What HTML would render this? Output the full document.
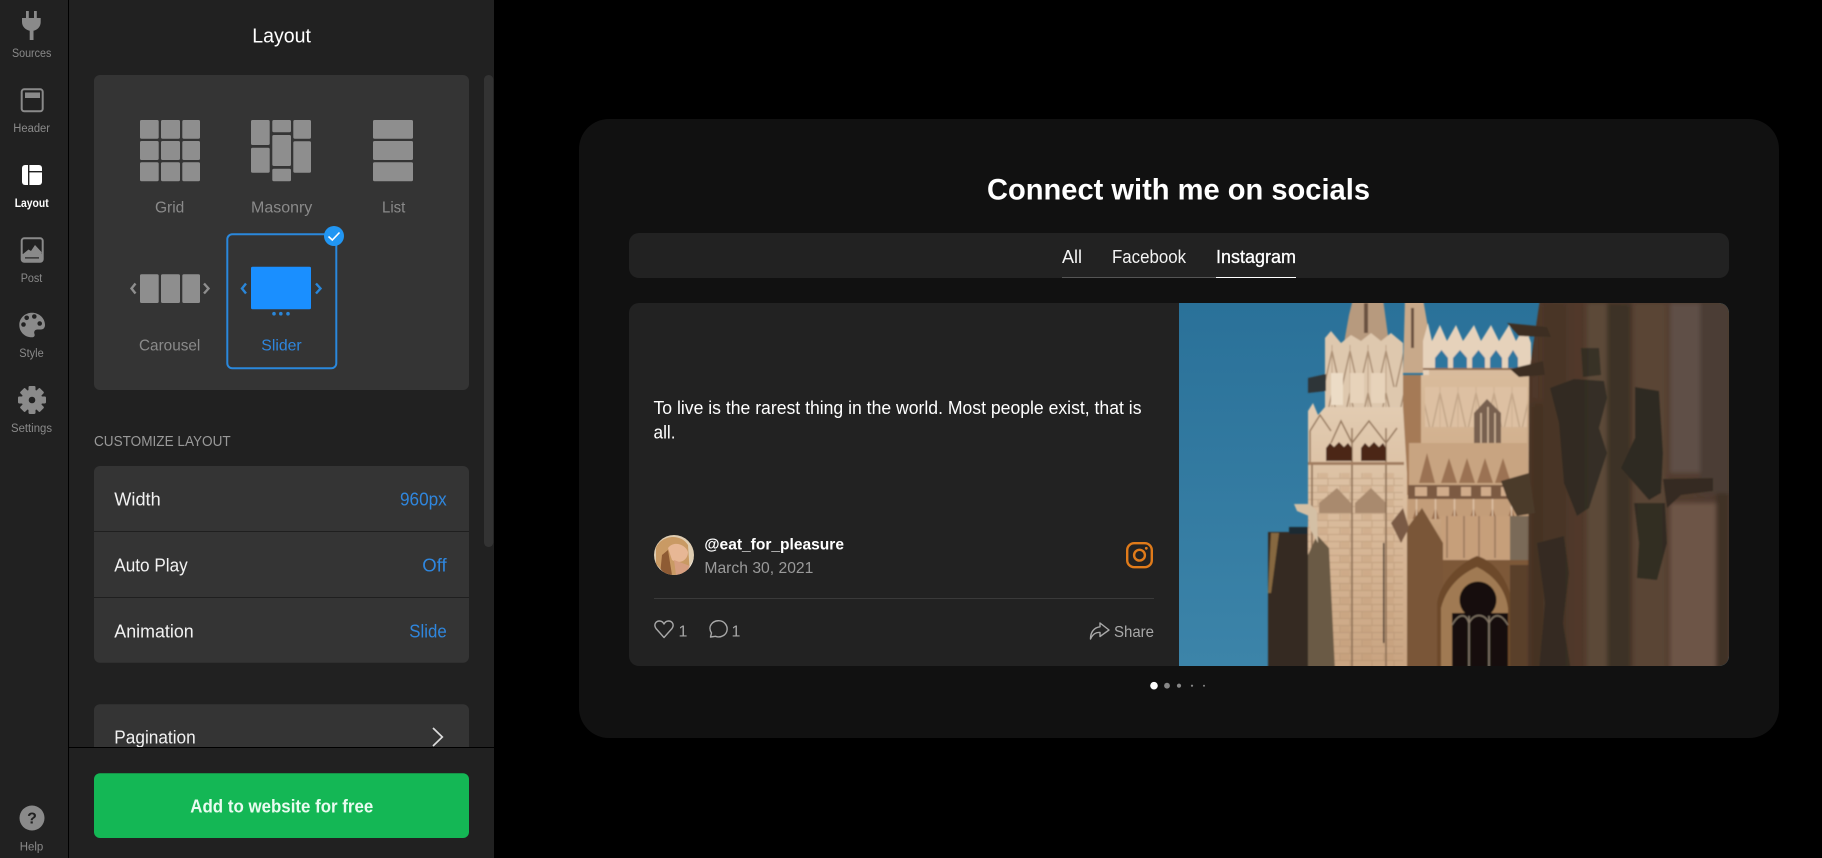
<!DOCTYPE html>
<html><head><meta charset="utf-8"><title>Layout</title>
<style>
html,body{margin:0;padding:0;background:#000;width:1822px;height:858px;overflow:hidden}
svg{display:block}
text{font-family:"Liberation Sans",sans-serif}
</style></head><body>
<svg xmlns="http://www.w3.org/2000/svg" width="1822" height="858" viewBox="0 0 1822 858">
<defs>
<clipPath id="cc"><rect x="629" y="303" width="1100" height="363" rx="10"/></clipPath>
<clipPath id="av"><circle cx="674" cy="555" r="20"/></clipPath>
<filter id="soft" x="-5%" y="-5%" width="110%" height="110%"><feGaussianBlur stdDeviation="0.9"/></filter>
<filter id="soft2" x="-10%" y="-10%" width="120%" height="120%"><feGaussianBlur stdDeviation="2"/></filter>
<linearGradient id="sky" x1="0" y1="0" x2="0" y2="1"><stop offset="0" stop-color="#2a7199"/><stop offset="1" stop-color="#3c84a9"/></linearGradient>
<linearGradient id="mid" x1="0" y1="0" x2="0" y2="1"><stop offset="0" stop-color="#d9bb9b"/><stop offset=".45" stop-color="#cba783"/><stop offset=".72" stop-color="#b08a66"/><stop offset="1" stop-color="#6b4a30"/></linearGradient>
<linearGradient id="tow" x1="0" y1="0" x2="0" y2="1"><stop offset="0" stop-color="#e2ccb2"/><stop offset=".5" stop-color="#d8b898"/><stop offset="1" stop-color="#c8a380"/></linearGradient>
<linearGradient id="wing" x1="0" y1="0" x2="1" y2="0"><stop offset="0" stop-color="#4e3628"/><stop offset=".5" stop-color="#533c2e"/><stop offset="1" stop-color="#4f3b30"/></linearGradient>
<pattern id="brick" width="22" height="14" patternUnits="userSpaceOnUse"><path d="M0 .5H22M0 7.5H22M7 0V7M17 7V14" stroke="#a58464" stroke-width="1" opacity=".4"/><rect x="8" y="1" width="9" height="6" fill="#c29a75" opacity=".3"/></pattern>
<pattern id="arch" width="18" height="42" patternUnits="userSpaceOnUse"><path d="M1 42L9 6L17 42" fill="none" stroke="#8e6f54" stroke-width="1.4"/><path d="M9 0V42" stroke="#a58668" stroke-width=".8"/></pattern>
<pattern id="orn" width="19" height="32" patternUnits="userSpaceOnUse"><path d="M3 32L9.5 12L16 32Z" fill="#9a7050"/><path d="M9.5 0V32" stroke="#e0c5a9" stroke-width="1.3"/></pattern>
</defs>

<rect width="1822" height="858" fill="#000"/>

<!-- icon rail -->
<rect x="0" y="0" width="68" height="858" fill="#212121"/>
<rect x="68" y="0" width="1" height="858" fill="#000"/>
<rect x="69" y="0" width="425" height="858" fill="#212121"/>

<g fill="#8a8a8a">
<rect x="26" y="11" width="2.8" height="7"/><rect x="34" y="11" width="2.8" height="7"/>
<path d="M22 18h18.7v4c0 5-3.6 8-7.2 8.7V40h-3.8V30.7c-3.6-.7-7.7-3.7-7.7-8.7z"/>
<rect x="21.7" y="89.3" width="21" height="22" rx="2.5" fill="none" stroke="#8a8a8a" stroke-width="2"/>
<rect x="25" y="92.5" width="15" height="5.5"/>
<rect x="21.7" y="238.3" width="21" height="23.5" rx="2.5" fill="none" stroke="#8a8a8a" stroke-width="2"/>
<path d="M23 254L28.5 249.5L31 251L35 245L41.5 252V254Z"/>
<rect x="22" y="254" width="20" height="7.5"/>
<rect x="25" y="257.3" width="14" height="1.2" fill="#212121"/>
<path d="M32 312.7C25 312.7 19.3 318 19.3 325C19.3 332 25 337.5 32 337.3C34.5 337.3 35 335.5 34.5 334C33.5 331.5 35 329.5 37.5 329.5H41C43.5 329.5 45 327.5 45 325C45 318 39 312.7 32 312.7Z"/>
<circle cx="32" cy="400" r="10.5"/>
<rect x="28.5" y="386" width="7" height="28" rx="1.2"/><rect x="28.5" y="386" width="7" height="28" rx="1.2" transform="rotate(45 32 400)"/><rect x="28.5" y="386" width="7" height="28" rx="1.2" transform="rotate(90 32 400)"/><rect x="28.5" y="386" width="7" height="28" rx="1.2" transform="rotate(135 32 400)"/>
<circle cx="32" cy="818" r="12.5"/>
</g>
<g fill="#212121"><circle cx="26.7" cy="317.8" r="2.3"/><circle cx="34.3" cy="316.5" r="2.3"/><circle cx="39.7" cy="323.5" r="2.3"/><circle cx="23.5" cy="324.5" r="2.3"/><circle cx="32" cy="400" r="3.3"/></g>
<text x="32" y="823.5" font-size="16" font-weight="700" fill="#212121" text-anchor="middle">?</text>
<rect x="22" y="165" width="20" height="20" rx="3" fill="#fff"/>
<rect x="28" y="165" width="1.4" height="20" fill="#212121"/><rect x="29" y="171" width="13" height="1.4" fill="#212121"/>

<g font-size="11.5" fill="#8a8a8a">
<text x="12" y="57" textLength="39.3" lengthAdjust="spacingAndGlyphs">Sources</text>
<text x="13.3" y="132" textLength="36.7" lengthAdjust="spacingAndGlyphs">Header</text>
<text x="14.7" y="207" textLength="34" lengthAdjust="spacingAndGlyphs" fill="#fff" font-weight="700">Layout</text>
<text x="20.7" y="282" textLength="21.6" lengthAdjust="spacingAndGlyphs">Post</text>
<text x="19.3" y="357" textLength="24.4" lengthAdjust="spacingAndGlyphs">Style</text>
<text x="11" y="432" textLength="41" lengthAdjust="spacingAndGlyphs">Settings</text>
<text x="19.7" y="850.5" textLength="23.6" lengthAdjust="spacingAndGlyphs">Help</text>
</g>

<!-- panel -->
<text x="252.3" y="42.5" font-size="20" fill="#fff" textLength="58.7" lengthAdjust="spacingAndGlyphs">Layout</text>
<rect x="484" y="75" width="9.3" height="472" rx="4.5" fill="#333"/>
<rect x="94" y="75" width="375" height="315" rx="6" fill="#343434"/>

<g fill="#8e8e8e">
<!-- grid -->
<rect x="140" y="120" width="18.7" height="18.7" rx="1.5"/><rect x="161" y="120" width="19" height="18.7" rx="1.5"/><rect x="182.3" y="120" width="17.7" height="18.7" rx="1.5"/>
<rect x="140" y="141" width="18.7" height="19" rx="1.5"/><rect x="161" y="141" width="19" height="19" rx="1.5"/><rect x="182.3" y="141" width="17.7" height="19" rx="1.5"/>
<rect x="140" y="162.3" width="18.7" height="19" rx="1.5"/><rect x="161" y="162.3" width="19" height="19" rx="1.5"/><rect x="182.3" y="162.3" width="17.7" height="19" rx="1.5"/>
<!-- masonry -->
<rect x="251" y="120" width="18.7" height="25" rx="1.5"/><rect x="251" y="147.7" width="18.7" height="25" rx="1.5"/>
<rect x="272.3" y="120" width="18.7" height="12.3" rx="1.5"/><rect x="272.3" y="135" width="18.7" height="31" rx="1.5"/><rect x="272.3" y="168.7" width="18.7" height="12.6" rx="1.5"/>
<rect x="293.3" y="120" width="17.7" height="18.7" rx="1.5"/><rect x="293.3" y="141.3" width="17.7" height="31.4" rx="1.5"/>
<!-- list -->
<rect x="373" y="120" width="40" height="18.7" rx="1.5"/><rect x="373" y="141" width="40" height="19" rx="1.5"/><rect x="373" y="162.3" width="40" height="19" rx="1.5"/>
<!-- carousel -->
<rect x="140" y="274.3" width="18.7" height="28.7" rx="1.5"/><rect x="161" y="274.3" width="19" height="28.7" rx="1.5"/><rect x="182.3" y="274.3" width="17.7" height="28.7" rx="1.5"/>
</g>
<path d="M135.5 283.5L131.5 288.5L135.5 293.5M204 283.5L208.5 288.5L204 293.5" fill="none" stroke="#8e8e8e" stroke-width="2.4"/>

<g font-size="16" fill="#8a8a8a">
<text x="155" y="212.5" textLength="29.3" lengthAdjust="spacingAndGlyphs">Grid</text>
<text x="251" y="212.5" textLength="61.3" lengthAdjust="spacingAndGlyphs">Masonry</text>
<text x="382" y="212.5" textLength="23.3" lengthAdjust="spacingAndGlyphs">List</text>
<text x="139" y="350.3" textLength="61.3" lengthAdjust="spacingAndGlyphs">Carousel</text>
<text x="261.3" y="350.3" textLength="40.4" lengthAdjust="spacingAndGlyphs" fill="#2f86dd">Slider</text>
</g>

<rect x="227.3" y="234.3" width="109" height="134" rx="5" fill="none" stroke="#2a88dc" stroke-width="2"/>
<rect x="251" y="266.7" width="60" height="42.6" rx="1.5" fill="#1a8fff"/>
<g fill="#2a86d8"><circle cx="274" cy="313.7" r="1.8"/><circle cx="280.8" cy="313.7" r="1.8"/><circle cx="288" cy="313.7" r="1.8"/></g>
<path d="M246 283.5L242 288.5L246 293.5M316 283.5L320.5 288.5L316 293.5" fill="none" stroke="#2a86d8" stroke-width="2.4"/>
<circle cx="334" cy="236" r="10" fill="#2196f3"/>
<path d="M328.5 236.5L332.3 240L339.5 232.5" fill="none" stroke="#fff" stroke-width="1.6"/>

<text x="94" y="446" font-size="15" fill="#999" textLength="136.7" lengthAdjust="spacingAndGlyphs">CUSTOMIZE LAYOUT</text>

<rect x="94" y="466" width="375" height="196.7" rx="6" fill="#343434"/>
<rect x="94" y="531" width="375" height="1" fill="#1f1f1f"/>
<rect x="94" y="597" width="375" height="1" fill="#1f1f1f"/>
<g font-size="18" fill="#f2f2f2">
<text x="114.3" y="505.5" textLength="46.4" lengthAdjust="spacingAndGlyphs">Width</text>
<text x="114.3" y="571.5" textLength="73.4" lengthAdjust="spacingAndGlyphs">Auto Play</text>
<text x="114.3" y="637.5" textLength="79.4" lengthAdjust="spacingAndGlyphs">Animation</text>
</g>
<g font-size="18" fill="#2f86dd">
<text x="400" y="505.5" textLength="46.7" lengthAdjust="spacingAndGlyphs">960px</text>
<text x="422.3" y="571.5" textLength="24.4" lengthAdjust="spacingAndGlyphs">Off</text>
<text x="409.3" y="637.5" textLength="37.4" lengthAdjust="spacingAndGlyphs">Slide</text>
</g>
<rect x="94" y="704.3" width="375" height="60" rx="6" fill="#343434"/>
<text x="114.3" y="743.5" font-size="18" fill="#f2f2f2" textLength="81.4" lengthAdjust="spacingAndGlyphs">Pagination</text>
<path d="M433 728L442.3 737L433 746" fill="none" stroke="#ddd" stroke-width="1.7"/>

<rect x="69" y="747" width="425" height="111" fill="#212121"/>
<rect x="68" y="747" width="426" height="1" fill="#000"/>
<rect x="94" y="773.3" width="375" height="64.7" rx="6" fill="#14b755"/>
<text x="190.3" y="812.5" font-size="18" font-weight="700" fill="#e9fbf0" textLength="183" lengthAdjust="spacingAndGlyphs">Add to website for free</text>

<!-- widget -->
<rect x="579" y="119" width="1200" height="619" rx="30" fill="#111"/>
<text x="987" y="199.3" font-size="30" font-weight="700" fill="#fff" textLength="383" lengthAdjust="spacingAndGlyphs">Connect with me on socials</text>
<rect x="629" y="233" width="1100" height="45" rx="10" fill="#222"/>
<g font-size="18" fill="#f4f4f4">
<text x="1062" y="263" textLength="20" lengthAdjust="spacingAndGlyphs">All</text>
<text x="1112" y="263" textLength="74" lengthAdjust="spacingAndGlyphs">Facebook</text>
<text x="1216" y="263" textLength="80" lengthAdjust="spacingAndGlyphs" fill="#fff" stroke="#fff" stroke-width=".3">Instagram</text>
</g>
<rect x="1062" y="277" width="154" height="1" fill="#555"/>
<rect x="1216" y="277" width="80" height="1" fill="#fff"/>

<g clip-path="url(#cc)">
<rect x="629" y="303" width="1100" height="363" fill="#222"/>
<g transform="translate(1179 303)">
<rect width="550" height="363" fill="url(#sky)"/>
<g filter="url(#soft)">
<!-- spires -->
<path d="M165 40L170 12L174 -4H204L210 40Z" fill="#b79a7e"/>
<path d="M224 70L226 -4H244L250 30L254 70Z" fill="#c8a98a"/>
<path d="M185 0h4v30h-4zM232 5h3v40h-3z" fill="#6b5140"/>
<!-- upper tower -->
<path d="M146 35L152 28L162 40L172 32L182 38L192 30L202 38L212 30L224 40V104H146Z" fill="#dec8ae"/>
<rect x="146" y="42" width="78" height="62" fill="url(#arch)" opacity=".7"/>
<rect x="152" y="70" width="12" height="32" fill="#ecdcc6"/><rect x="171" y="70" width="14" height="30" fill="#e7d3ba"/><rect x="192" y="70" width="14" height="30" fill="#e7d3ba"/>
<!-- pinnacles -->
<path d="M244 72V38L249 20L253 38L261 22L268 38L277 22L284 38L295 22L302 38L312 22L320 38L330 22L337 38L346 22L352 40V72Z" fill="#e6d2bb"/>
<g fill="#2e769e"><path d="M256 65V55L262.500 47L269 55V65Z"/><path d="M274 65V55L281 47L288 55V65Z"/><path d="M293 65V55L299.500 47L306 55V65Z"/><path d="M311 65V55L317 47L323 55V65Z"/><path d="M329 65V55L334 47L339 55V65Z"/></g>
<rect x="244" y="65" width="106" height="2" fill="#8f6a4e"/>
<rect x="250" y="67" width="100" height="14" fill="#d8bb9c"/>
<!-- right mid section -->
<rect x="224" y="72" width="128" height="295" fill="url(#mid)"/>
<rect x="224" y="72" width="18" height="120" fill="#a57a56"/>
<rect x="246" y="84" width="102" height="40" fill="#ddc0a2"/>
<rect x="246" y="84" width="102" height="40" fill="url(#arch)" opacity=".35"/>
<path d="M295 143V110L308 96L322 110V143Z" fill="#78604f"/>
<path d="M302 140V110M309 140V104M316 140V110" stroke="#d8bea2" stroke-width="1.4"/>
<rect x="230" y="140" width="118" height="42" fill="#c8a481"/>
<g fill="#9b7252"><path d="M240 180L248 150L256 180Z"/><path d="M262 180L270 155L278 180Z"/><path d="M280 180L288 155L296 180Z"/><path d="M298 180L306 155L314 180Z"/><path d="M316 180L324 155L332 180Z"/></g>
<rect x="229" y="182" width="119" height="14" fill="#7c5a42"/>
<path d="M236 184h12v9h-12zM258 184h12v9h-12zM282 184h10v9h-10zM302 184h10v9h-10zM322 184h10v9h-10z" fill="#d0ab8a"/>
<rect x="229" y="196" width="119" height="20" fill="#c39d79"/>
<rect x="229" y="196" width="119" height="20" fill="url(#orn)"/>
<rect x="262" y="213" width="69" height="44" fill="#c69f7a"/>
<rect x="331" y="213" width="20" height="47" fill="#7a6a58"/>
<path d="M268 213V255M285 213V255M300 213V255M316 213V255" stroke="#96755a" stroke-width="1.4"/>
<rect x="262" y="257" width="90" height="110" fill="#7d5838"/>
<path d="M226 367V228L243 205L264 240V367Z" fill="#7a5638"/>
<!-- main tower -->
<path d="M129 108L134 100L139 112L146 104H224L228 170V367H129Z" fill="url(#tow)"/>
<rect x="129" y="170" width="95" height="197" fill="url(#brick)"/>
<path d="M131 160V128L141 112L152 128M152 140L162 118L173 140M173 160V125M173 140L190 118L207 140M207 160V125M207 140L218 125" fill="none" stroke="#96795e" stroke-width="1.5"/>
<path d="M147 158V145L151 140L155 144L160 139L165 144L169 140L173 145V158Z" fill="#4b2517"/>
<path d="M182 158V145L186 140L190 144L195 139L200 144L204 140L207 145V158Z" fill="#4b2517"/>
<rect x="129" y="159" width="96" height="3" fill="#a27e60"/>
<g fill="#a98a6e"><path d="M140 200L158 185L172 200V210H140Z"/><path d="M176 200L192 185L207 200V210H176Z"/></g>
<path d="M133 162V367M173 162V367M207 162V367" stroke="#8d6f55" stroke-width="1.6"/>
<rect x="204" y="240" width="1.5" height="100" fill="#3a2a20"/>
<path d="M129 252L138 232L150 245L156 367H129Z" fill="#6b5a44"/>
<path d="M224 205L230 225L222 240L212 220Z" fill="#7a5a44"/>
<!-- left block -->
<rect x="89" y="229" width="40" height="138" fill="#362c22"/>
<path d="M92 230H100L92 290H89Z" fill="#86683f"/>
<rect x="110" y="224" width="19" height="7" fill="#1e2b33"/>
<!-- gargoyles on tower -->
<path d="M129 75L147 71V88L129 90Z" fill="#2f3537"/>
<path d="M115 201H131L138 208L139 240L131 226L130 213L118 208Z" fill="#d4c0a5"/>
<!-- door -->
<path d="M258 367V300C262 275 285 258 298 253C316 258 330 278 333 300V367Z" fill="#6d4a2b"/>
<path d="M262 367V305C268 280 288 268 298 264C310 270 326 282 329 305V367Z" fill="#a07a52"/>
<circle cx="299" cy="297" r="18.500" fill="#17110d"/>
<rect x="273" y="310" width="56" height="57" fill="#15100d"/>
<path d="M290 313V367M310 313V367" stroke="#8a7d6c" stroke-width="1.5"/>
<path d="M273 322C280 310 287 310 290 320C295 310 305 310 310 320C315 310 322 310 329 322" fill="none" stroke="#8a7d6c" stroke-width="1.2"/>
<rect x="331" y="262" width="22" height="105" fill="#5a3f2c"/>
<!-- right wing -->
<path d="M361 -4L350 70L349 367H554V-4Z" fill="url(#wing)"/>
<g filter="url(#soft2)">
<rect x="352" y="100" width="18" height="267" fill="#443022"/>
<rect x="364" y="0" width="24" height="367" fill="#4a3428"/>
<rect x="408" y="0" width="20" height="367" fill="#5b4838"/>
<rect x="428" y="0" width="24" height="367" fill="#3d3026"/>
<rect x="455" y="0" width="32" height="367" fill="#5a4436"/>
<rect x="491" y="0" width="30" height="170" fill="#5f5046"/>
<rect x="491" y="200" width="46" height="167" fill="#6d5546"/>
<rect x="521" y="0" width="29" height="190" fill="#4c3e36"/>
<rect x="537" y="190" width="13" height="177" fill="#3f3028"/>
</g>
<g fill="#2e2a22">
<path d="M328 20L368 24L372 34L340 33Z" fill="#3c2f24"/>
<path d="M331 66L364 58L366 72L340 74Z" fill="#3c2f24"/>
<path d="M322 178L350 170L356 210L338 213L328 195Z" fill="#4b3a2a"/>
<path d="M371 85L395 76L425 78L428 95L420 125L428 150L410 205L398 213L385 180L380 120Z" opacity=".85"/>
<path d="M402 45L420 45L422 72L404 74Z" opacity=".8"/>
<path d="M456 84L480 88L484 150L482 190L470 197L442 165L456 135Z"/>
<path d="M455 200L486 200L488 240L478 277L458 275L460 240Z" opacity=".9"/>
<path d="M484 176L534 175L534 188L502 192L488 205Z" fill="#362a22"/>
<path d="M358 240L385 233L390 270L384 320L392 367H360L366 300Z" opacity=".7"/>
</g>
</g>
</g>

<text x="653.5" y="414" font-size="18" fill="#fff" textLength="488" lengthAdjust="spacingAndGlyphs">To live is the rarest thing in the world. Most people exist, that is</text>
<text x="653.5" y="438.5" font-size="18" fill="#fff" textLength="22" lengthAdjust="spacingAndGlyphs">all.</text>

<g clip-path="url(#av)">
<rect x="654" y="535" width="40" height="40" fill="#dfcdb2"/>
<path d="M656 575V548C660 536 680 532 688 545L690 575Z" fill="#c99a64"/>
<path d="M668 548C674 540 686 545 688 552C688 560 680 565 672 560Z" fill="#e7b795"/>
<path d="M668 550L672 575H660L662 555Z" fill="#8e5b34"/>
<path d="M674 560L690 566L688 575H676Z" fill="#d69e80"/>
<path d="M654 562L666 575H654Z" fill="#efe6da"/><path d="M685 575L694 558V575Z" fill="#efe6da"/>
</g>
<text x="704.4" y="549.7" font-size="16" font-weight="700" fill="#fff" textLength="139.6" lengthAdjust="spacingAndGlyphs">@eat_for_pleasure</text>
<text x="704.4" y="573" font-size="16" fill="#9a9a9a" textLength="109" lengthAdjust="spacingAndGlyphs">March 30, 2021</text>

<rect x="1127.2" y="543.2" width="24.6" height="24" rx="7" fill="none" stroke="#e07b1a" stroke-width="2.4"/>
<circle cx="1139.5" cy="555.2" r="5.4" fill="none" stroke="#e07b1a" stroke-width="2.4"/>
<circle cx="1146.3" cy="548.3" r="1.4" fill="#e07b1a"/>

<rect x="654" y="598" width="500" height="1" fill="#3a3a3a"/>

<g fill="none" stroke="#a8a8a8" stroke-width="1.4" stroke-linejoin="round">
<path d="M664 637.5L656 628.5C653.5 625 655.5 621 659.5 621C661.5 621 663 622 664 624C665 622 666.5 621 668.5 621C672.5 621 674.5 625 672 628.5Z"/>
<path d="M710.5 637L711.5 633C709.5 630 709.5 626.5 711.5 624C714.5 620 721.5 619.5 725 623.5C728.5 627.5 727.5 633 723.5 635.5C721 637 718 637.3 715.5 636.3Z"/>
<path d="M1100 623L1109 630L1100 636.5V632.5C1096 632 1092.5 634.5 1090.5 639C1090.5 632 1094 627.5 1100 626.8Z"/>
</g>
<g font-size="16" fill="#a8a8a8">
<text x="678.5" y="636.3">1</text>
<text x="731.5" y="636.3">1</text>
<text x="1114" y="637" textLength="40" lengthAdjust="spacingAndGlyphs">Share</text>
</g>
</g>

<circle cx="1154" cy="685.7" r="3.8" fill="#fff"/>
<circle cx="1167" cy="685.7" r="2.9" fill="#888"/>
<circle cx="1179" cy="685.7" r="2.1" fill="#888"/>
<circle cx="1192" cy="685.7" r="1.1" fill="#888"/>
<circle cx="1204" cy="685.7" r="1" fill="#888"/>
</svg>
</body></html>
